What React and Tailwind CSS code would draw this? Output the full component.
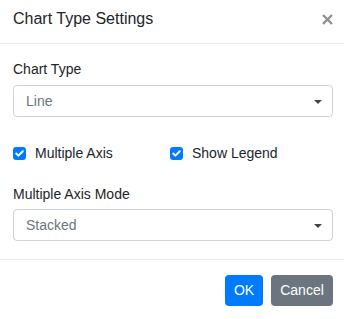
import { useState } from 'react';

function Caret() {
  return (
    <svg width="8" height="4" viewBox="0 0 8 4" className="absolute right-[10px] top-[14px]">
      <path d="M0 0 L8 0 L4 4 Z" fill="#444" />
    </svg>
  );
}

function Select({ value }) {
  return (
    <div className="relative h-[32px] w-full rounded-[4px] border border-[#ced4da] bg-white">
      <span className="absolute left-[12px] top-[5px] text-[14px] leading-[21px] text-[#6c757d]">{value}</span>
      <Caret />
    </div>
  );
}

function Check({ label, checked, onToggle }) {
  return (
    <label className="flex items-center gap-[9px] cursor-pointer" onClick={onToggle}>
      <span className={`flex h-[13px] w-[13px] items-center justify-center rounded-[3px] ${checked ? 'bg-[#007bff]' : 'border border-[#adb5bd] bg-white'}`}>
        {checked && (
          <svg width="9" height="7" viewBox="0 0 9 7">
            <path d="M1.2 3.6 L3.4 5.6 L7.8 1.3" fill="none" stroke="#fff" strokeWidth="2" strokeLinecap="round" strokeLinejoin="round" />
          </svg>
        )}
      </span>
      <span className="text-[14px] leading-[21px] text-[#212529]">{label}</span>
    </label>
  );
}

export default function App() {
  const [multi, setMulti] = useState(true);
  const [legend, setLegend] = useState(true);

  return (
    <div className="h-[319px] w-[344px] bg-white" style={{ fontFamily: '"Liberation Sans", Arial, sans-serif' }}>
      {/* header */}
      <div className="relative h-[44px] border-b border-[#e9ecef] pl-[13px] pr-[11px] pt-[7px]">
        <h5 className="text-[16px] leading-[24px] text-[#212529]">Chart Type Settings</h5>
        <svg width="11" height="11" viewBox="0 0 11 11" className="absolute right-[11px] top-[14px]">
          <path d="M1 1 L10 10 M10 1 L1 10" stroke="#909090" strokeWidth="2.4" />
        </svg>
      </div>

      {/* body */}
      <div className="h-[216px] border-b border-[#e9ecef] pl-[13px] pr-[11px] pt-[15px]">
        <div className="text-[14px] leading-[21px] text-[#212529]">Chart Type</div>
        <div className="mt-[5px]">
          <Select value="Line" />
        </div>

        <div className="mt-[26px] flex">
          <div className="w-[157px]">
            <Check label="Multiple Axis" checked={multi} onToggle={() => setMulti(!multi)} />
          </div>
          <Check label="Show Legend" checked={legend} onToggle={() => setLegend(!legend)} />
        </div>

        <div className="mt-[20px] text-[14px] leading-[21px] text-[#212529]">Multiple Axis Mode</div>
        <div className="mt-[4px]">
          <Select value="Stacked" />
        </div>
      </div>

      {/* footer */}
      <div className="flex justify-end gap-[8px] pr-[11px] pt-[15px]">
        <button className="h-[31px] w-[38px] rounded-[4px] bg-[#007bff] text-[14px] text-white">OK</button>
        <button className="h-[31px] w-[62px] rounded-[4px] bg-[#6c757d] text-[14px] text-white">Cancel</button>
      </div>
    </div>
  );
}
